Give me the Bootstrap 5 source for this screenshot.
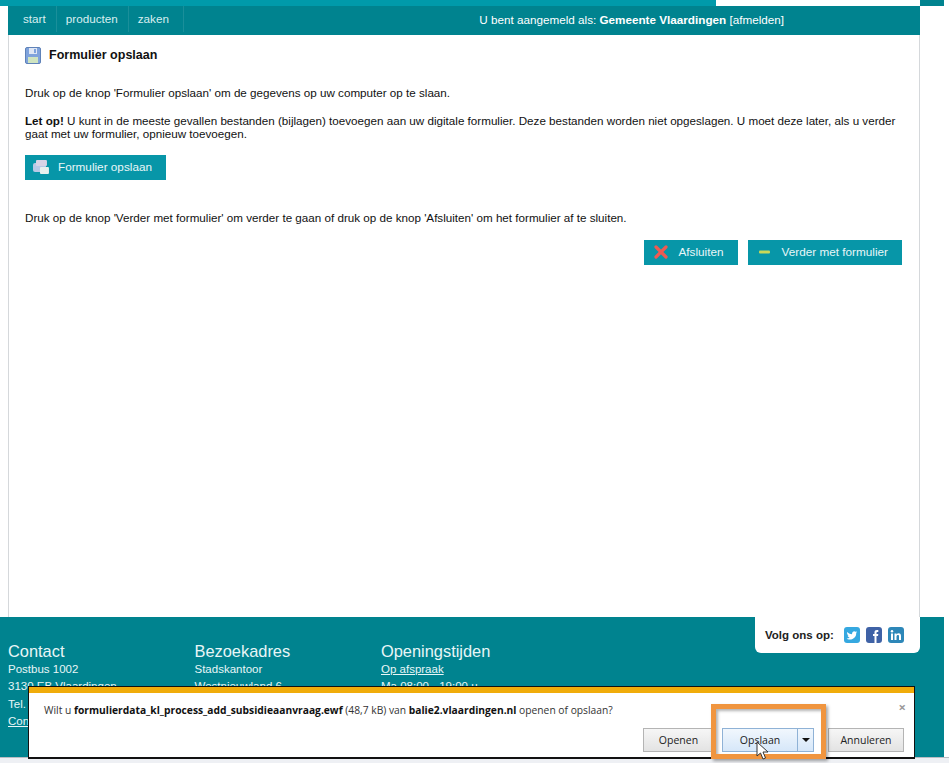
<!DOCTYPE html>
<html lang="nl"><head><meta charset="utf-8"><title>Formulier opslaan</title>
<link href="https://cdn.jsdelivr.net/npm/bootstrap@5.3.0/dist/css/bootstrap.min.css" rel="stylesheet">
<style>
html,body{height:763px;overflow:hidden;background:#fff}
body{font-family:"Liberation Sans",Arial,sans-serif;font-size:11.65px;color:#111;line-height:13px;position:relative}
.topstrip{height:6px;width:944px}
.stripa{width:716px;background:#009aaa}.stripb{width:204px}.stripc{width:24px;background:#00838f}
.shell{width:912px;margin-left:8px;height:611px;border-left:1px solid #d5d8db;border-right:1px solid #d5d8db}
.hdr{background:#00838f;height:29px;margin:0 -1px;color:#fff;padding-left:15px;font-size:11.7px}
.hdrnav{align-self:flex-start}
.hdrnav a{color:#d8eef0;text-decoration:none;padding:0 10px 0 9px;line-height:26px;border-left:1px solid rgba(255,255,255,.1)}
.hdrnav a:first-child{padding-left:0;border-left:0}
.hdrnav a:last-child{border-right:1px solid rgba(255,255,255,.1);padding-right:14px}
.hdrwho{margin-left:auto;margin-right:136px;line-height:28px;align-self:flex-start}
.hdrwho a{color:#fff;text-decoration:none}
.inner{padding:0 16px}
.ttl{margin-top:11px;height:19px;gap:7px;font-size:12.5px;font-weight:700}
.para{margin:0}
.b1{margin-top:21px}.b2{margin-top:15px}.b3{margin-top:31px}
.tealbtn{background:#0796a8;color:#e9f7f8;height:25px;border:0;border-radius:0;font-size:11.75px;padding:0 14px 2px 10px;display:inline-flex;align-items:center;gap:10px;line-height:13px;white-space:nowrap}
.tealbtn:hover{background:#0796a8;color:#e9f7f8}
.savebtn{margin-top:15px;width:141px;padding-left:8px;gap:9px}
.acts{margin-top:16px;margin-right:1px;gap:10px}
.footzone{background:#00838f;height:140px;width:944px;color:#e8f6f7;position:relative;padding:25px 0 0 8px}
.fcol{width:186.5px;font-size:11.5px;line-height:17.3px}
.fhead{font-size:16.4px;line-height:18px;margin-bottom:1px}
.fcol a{color:#e8f6f7}
.social{position:absolute;left:755px;top:0;width:165px;height:36px;background:#fff;border-radius:0 0 6px 6px;font-weight:700;color:#222;font-size:11.5px;padding:0 0 0 10px;gap:10px}
.social .soclist{gap:6px}
.dlbar{position:absolute;left:28px;top:686px;width:887px;height:73px;background:#fff;border:1px solid #111;border-bottom-width:2px;font-family:"Open Sans",sans-serif;font-size:10.27px;color:#333}
.dlbar b{color:#111}
.dlstripe{height:6px;background:#f0ac0a}
.dlmsg{padding:10px 0 0 15px;line-height:15px}
.dlclose{position:absolute;right:8px;top:14px;color:#9a9a9a;font-size:13px;line-height:13px;font-weight:700}
.ie{position:absolute;height:24px;top:41px;background:linear-gradient(#f6f6f6,#e3e3e3);border:1px solid #b4b4b4;font-size:10.5px;line-height:22px;text-align:center;color:#222}
.ie1{left:614px;width:71px}
.ie2{left:693px;width:75px;background:linear-gradient(#f1f7fd,#d6e7f9);border-color:#8fb2d6;border-right:0}
.ie3{left:768px;width:17px;background:linear-gradient(#f1f7fd,#d6e7f9);border-color:#8fb2d6}
.ie4{left:799px;width:76px}
.caret3{position:absolute;left:4px;top:9px;width:0;height:0;border:4px solid transparent;border-top:4px solid #111;border-bottom:0}
.orangebox{position:absolute;left:711px;top:704px;width:115px;height:55px;border:5px solid #f0953f;box-shadow:2px 2px 3px rgba(0,0,0,.35),inset 2px 2px 3px rgba(0,0,0,.3)}
.cursorsvg{position:absolute;left:756px;top:741px}
.bottomstrip{position:absolute;left:0;top:757px;width:949px;height:6px;background:#eef0f4;border-top:1px solid #b9bcc2}
</style></head><body>
<div class="topstrip d-flex"><div class="stripa"></div><div class="stripb"></div><div class="stripc"></div></div>
<div class="shell">
 <div class="hdr d-flex align-items-center">
  <div class="hdrnav d-flex"><a href="#">start</a><a href="#">producten</a><a href="#">zaken</a></div>
  <div class="hdrwho">U bent aangemeld als: <b>Gemeente Vlaardingen</b> <a href="#">[afmelden]</a></div>
 </div>
 <div class="inner">
  <div class="ttl d-flex align-items-center">
   <svg width="17" height="17" viewBox="0 0 17 17"><rect x=".5" y=".5" width="15" height="16" rx="1.5" fill="#7fa3dc" stroke="#5f82b8"/><rect x="4" y="1" width="8" height="6" fill="#dfe7f5"/><rect x="9" y="2" width="2" height="4" fill="#7fa3dc"/><rect x="3" y="10" width="10" height="6" fill="#cfe4c0"/></svg>
   <span>Formulier opslaan</span>
  </div>
  <p class="para b1">Druk op de knop 'Formulier opslaan' om de gegevens op uw computer op te slaan.</p>
  <p class="para b2"><b>Let op!</b> U kunt in de meeste gevallen bestanden (bijlagen) toevoegen aan uw digitale formulier. Deze bestanden worden niet opgeslagen. U moet deze later, als u verder gaat met uw formulier, opnieuw toevoegen.</p>
  <button class="btn tealbtn savebtn">
   <svg width="16" height="14" viewBox="0 0 16 14"><rect x="0" y="3" width="13" height="9" rx="2" fill="#b9c9e6"/><rect x="3" y="0" width="11" height="6" rx="1" fill="#d9d3e6"/><rect x="7" y="7" width="9" height="7" rx="1" fill="#e8f0ee"/></svg>
   <span>Formulier opslaan</span></button>
  <p class="para b3">Druk op de knop 'Verder met formulier' om verder te gaan of druk op de knop 'Afsluiten' om het formulier af te sluiten.</p>
  <div class="acts d-flex justify-content-end">
   <button class="btn tealbtn"><svg width="14" height="14" viewBox="0 0 14 14"><path d="M2 2 12 12M12 2 2 12" stroke="#ee5a52" stroke-width="3.2" stroke-linecap="round"/></svg><span>Afsluiten</span></button>
   <button class="btn tealbtn"><svg width="14" height="14" viewBox="0 0 14 14"><rect x="1" y="5.5" width="11" height="3" rx="1" fill="#c9d858"/></svg><span>Verder met formulier</span></button>
  </div>
 </div>
</div>
<div class="footzone d-flex">
 <div class="fcol"><div class="fhead">Contact</div>Postbus 1002<br>3130 EB Vlaardingen<br>Tel. 14 010<br><a href="#">Contact</a></div>
 <div class="fcol"><div class="fhead">Bezoekadres</div>Stadskantoor<br>Westnieuwland 6</div>
 <div class="fcol"><div class="fhead">Openingstijden</div><a href="#">Op afspraak</a><br>Ma 08:00 - 19:00 u</div>
 <div class="social d-flex align-items-center"><span>Volg ons op:</span>
  <div class="soclist d-flex">
   <svg width="16" height="16" viewBox="0 0 16 16"><rect width="16" height="16" rx="3" fill="#35a8e0"/><path d="M3 5c2 1.5 3.5 2.2 5 2.2C8 5 10 3.4 11.5 4.8L13 4.5 12.2 6C12.5 9.5 9.5 13 5 12.5 4 12.4 3.2 12 2.7 11.5 4 11.5 5 11.2 5.7 10.5 4.5 10.3 3.8 9.7 3.5 8.8L4.5 8.7C3.5 8 3 7 3 5Z" fill="#fff"/></svg>
   <svg width="16" height="16" viewBox="0 0 16 16"><rect width="16" height="16" rx="3" fill="#3f62a6"/><path d="M8.5 16V9H7V7h1.5V5.3C8.5 3.7 9.4 3 11 3h1.3v2H11.3c-.6 0-.8.3-.8.8V7h1.8l-.3 2h-1.500v7Z" fill="#fff"/></svg>
   <svg width="16" height="16" viewBox="0 0 16 16"><rect width="16" height="16" rx="3" fill="#2d87b8"/><rect x="3" y="6.5" width="2" height="6.5" fill="#fff"/><circle cx="4" cy="4.3" r="1.2" fill="#fff"/><path d="M6.5 6.5h2v1c.5-.8 1.3-1.2 2.2-1.2 1.7 0 2.3 1.1 2.3 2.8V13h-2V9.5c0-.9-.3-1.4-1.1-1.4s-1.4.6-1.4 1.5V13h-2Z" fill="#fff"/></svg>
  </div>
 </div>
</div>
<div class="bottomstrip"></div>
<div class="dlbar">
 <div class="dlstripe"></div>
 <div class="dlmsg">Wilt u <b>formulierdata_kl_process_add_subsidieaanvraag.ewf</b> (48,7 kB) van <b>balie2.vlaardingen.nl</b> openen of opslaan?</div>
 <div class="dlclose">×</div>
 <div class="ie ie1">Openen</div>
 <div class="ie ie2">Opslaan</div>
 <div class="ie ie3"><span class="caret3"></span></div>
 <div class="ie ie4">Annuleren</div>
</div>
<div class="orangebox"></div>
<svg class="cursorsvg" width="14" height="19" viewBox="0 0 14 19"><path d="M1 1V15L4.5 12 7 18 9.5 17 7 11H12Z" fill="#fff" stroke="#333" stroke-width="1"/></svg>
</body></html>
